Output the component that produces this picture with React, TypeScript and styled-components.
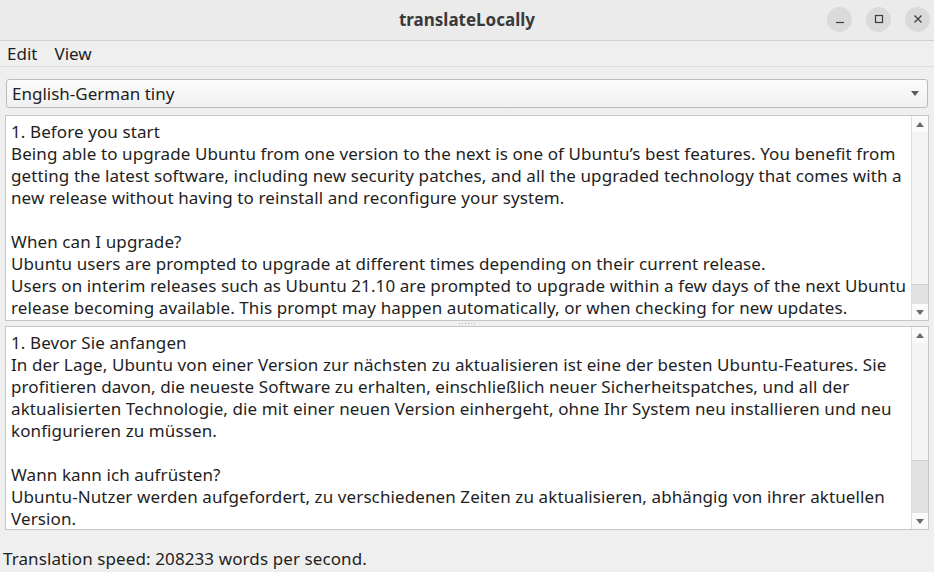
import React from "react";
import styled, { createGlobalStyle } from "styled-components";

const GlobalStyle = createGlobalStyle`
  html, body {
    margin: 0;
    padding: 0;
    background: #efefef;
  }
  body {
    font-family: "Noto Sans", "Open Sans", "DejaVu Sans", sans-serif;
    color: #1e1e1e;
  }
`;

const Window = styled.div`
  width: 934px;
  height: 572px;
  display: flex;
  flex-direction: column;
  background: #efefef;
  overflow: hidden;
`;

const TitleBar = styled.div`
  height: 40px;
  flex-shrink: 0;
  display: grid;
  grid-template-columns: 1fr auto 1fr;
  align-items: center;
  background: #ebebeb;
  border-bottom: 1px solid #cfcfcf;
`;

const Title = styled.div`
  grid-column: 2;
  font-size: 17px;
  font-weight: 700;
  color: #3a3a3a;
  margin-top: -2px;
`;

const WindowButtons = styled.div`
  grid-column: 3;
  justify-self: end;
  display: flex;
  gap: 14px;
  padding-right: 4px;
  margin-top: -2px;
`;

const CircleButton = styled.div`
  width: 25px;
  height: 25px;
  border-radius: 50%;
  background: #dadada;
  display: flex;
  align-items: center;
  justify-content: center;
  color: #3c3c3c;
`;

const MenuBar = styled.div`
  height: 25px;
  flex-shrink: 0;
  display: flex;
  align-items: center;
  gap: 17px;
  padding: 0 7px;
  font-size: 17px;
  border-bottom: 1px solid #dcdcdc;
`;

const Body = styled.div`
  flex: 1;
  display: flex;
  flex-direction: column;
  padding: 12px 5px 0 5px;
`;

const Combo = styled.div`
  height: 27px;
  margin: 0 1px 7px 1px;
  display: flex;
  align-items: center;
  justify-content: space-between;
  padding: 0 6px 0 5px;
  border: 1px solid #bcbcbc;
  border-radius: 3px;
  background: linear-gradient(#fbfbfb, #f1f1f1);
  font-size: 17px;
`;

const ComboArrow = styled.div`
  width: 0;
  height: 0;
  margin-right: 2px;
  border-left: 4px solid transparent;
  border-right: 4px solid transparent;
  border-top: 5px solid #5a5a5a;
`;

const Pane = styled.div<{ $h: number }>`
  height: ${(p) => p.$h}px;
  flex-shrink: 0;
  display: flex;
  border: 1px solid #c6c6c6;
  background: #ffffff;
`;

const TextArea = styled.div`
  flex: 1;
  overflow: hidden;
  padding: 8px 0 0 5px;
  font-size: 17px;
  letter-spacing: 0.1px;
  display: flex;
  flex-direction: column;
  gap: 6px;
`;

const Line = styled.div`
  white-space: pre;
  height: 16px;
  line-height: 16px;
  flex-shrink: 0;
`;

const ScrollBar = styled.div`
  width: 16px;
  display: flex;
  flex-direction: column;
  background: #f3f3f3;
  border-left: 1px solid #dedede;
`;

const ScrollButton = styled.div`
  height: 16px;
  display: flex;
  align-items: center;
  justify-content: center;
  background: #fafafa;
`;

const Arrow = styled.div<{ $up?: boolean }>`
  width: 0;
  height: 0;
  border-left: 4px solid transparent;
  border-right: 4px solid transparent;
  ${(p) =>
    p.$up ? "border-bottom: 5px solid #6a6a6a;" : "border-top: 5px solid #6a6a6a;"}
`;

const Track = styled.div`
  flex: 1;
  display: flex;
  flex-direction: column;
  justify-content: flex-end;
`;

const Handle = styled.div<{ $h: number }>`
  height: ${(p) => p.$h}px;
  background: #e1e1e1;
  border-top: 1px solid #d2d2d2;
`;

const Splitter = styled.div`
  height: 5px;
  flex-shrink: 0;
  display: flex;
  align-items: center;
  justify-content: center;
  gap: 2px;
`;

const Dot = styled.span`
  width: 1px;
  height: 1px;
  background: #b5b5b5;
`;

const StatusBar = styled.div`
  flex: 1;
  display: flex;
  align-items: center;
  padding: 15px 3px 0 0;
  margin-left: -2px;
  font-size: 17px;
  letter-spacing: 0.1px;
`;

const english = [
  "1. Before you start",
  "Being able to upgrade Ubuntu from one version to the next is one of Ubuntu’s best features. You benefit from",
  "getting the latest software, including new security patches, and all the upgraded technology that comes with a",
  "new release without having to reinstall and reconfigure your system.",
  "",
  "When can I upgrade?",
  "Ubuntu users are prompted to upgrade at different times depending on their current release.",
  "Users on interim releases such as Ubuntu 21.10 are prompted to upgrade within a few days of the next Ubuntu",
  "release becoming available. This prompt may happen automatically, or when checking for new updates.",
];

const german = [
  "1. Bevor Sie anfangen",
  "In der Lage, Ubuntu von einer Version zur nächsten zu aktualisieren ist eine der besten Ubuntu-Features. Sie",
  "profitieren davon, die neueste Software zu erhalten, einschließlich neuer Sicherheitspatches, und all der",
  "aktualisierten Technologie, die mit einer neuen Version einhergeht, ohne Ihr System neu installieren und neu",
  "konfigurieren zu müssen.",
  "",
  "Wann kann ich aufrüsten?",
  "Ubuntu-Nutzer werden aufgefordert, zu verschiedenen Zeiten zu aktualisieren, abhängig von ihrer aktuellen",
  "Version.",
];

const TextPane: React.FC<{ lines: string[]; height: number; handle: number }> = ({ lines, height, handle }) => (
  <Pane $h={height}>
    <TextArea>
      {lines.map((l, i) => (
        <Line key={i}>{l}</Line>
      ))}
    </TextArea>
    <ScrollBar>
      <ScrollButton>
        <Arrow $up />
      </ScrollButton>
      <Track>
        <Handle $h={handle} />
      </Track>
      <ScrollButton>
        <Arrow />
      </ScrollButton>
    </ScrollBar>
  </Pane>
);

const App: React.FC = () => {
  return (
    <>
      <GlobalStyle />
      <Window>
        <TitleBar>
          <Title>translateLocally</Title>
          <WindowButtons>
            <CircleButton>
              <svg width="10" height="10" viewBox="0 0 10 10">
                <path d="M1 8.5h8" stroke="currentColor" strokeWidth="1.2" />
              </svg>
            </CircleButton>
            <CircleButton>
              <svg width="10" height="10" viewBox="0 0 10 10">
                <rect x="1.5" y="1.5" width="7" height="7" fill="none" stroke="currentColor" strokeWidth="1.2" />
              </svg>
            </CircleButton>
            <CircleButton>
              <svg width="10" height="10" viewBox="0 0 10 10">
                <path d="M1.5 1.5l7 7M8.5 1.5l-7 7" stroke="currentColor" strokeWidth="1.2" />
              </svg>
            </CircleButton>
          </WindowButtons>
        </TitleBar>

        <MenuBar>
          <span>Edit</span>
          <span>View</span>
        </MenuBar>

        <Body>
          <Combo>
            <span>English-German tiny</span>
            <ComboArrow />
          </Combo>

          <TextPane lines={english} height={204} handle={19} />
          <Splitter>
            {Array.from({ length: 6 }).map((_, i) => (
              <Dot key={i} />
            ))}
          </Splitter>
          <TextPane lines={german} height={202} handle={52} />

          <StatusBar>Translation speed: 208233 words per second.</StatusBar>
        </Body>
      </Window>
    </>
  );
};

export default App;
